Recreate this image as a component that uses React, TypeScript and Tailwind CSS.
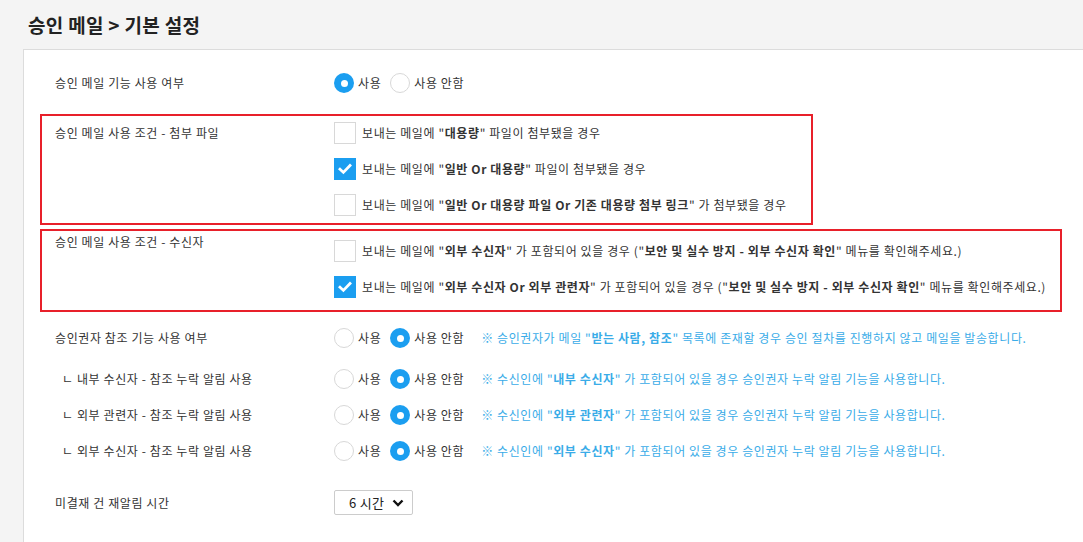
import React from "react";

const BLUE = "bg-[#1b9ef0]";

function Radio({ checked, label }: { checked?: boolean; label: string }) {
  return (
    <div className="flex items-center h-[20px]">
      {checked ? (
        <span className={`w-[20px] h-[20px] rounded-full ${BLUE} flex items-center justify-center`}>
          <span className="w-[7px] h-[7px] rounded-full bg-white" />
        </span>
      ) : (
        <span className="w-[20px] h-[20px] rounded-full border border-[#d8d8d8] bg-white" />
      )}
      <span className="ml-[4px] leading-[16px]">{label}</span>
    </div>
  );
}

function Check({ checked, children }: { checked?: boolean; children: React.ReactNode }) {
  return (
    <div className="flex items-center h-[22px]">
      {checked ? (
        <span className={`w-[22px] h-[22px] ${BLUE} flex items-center justify-center shrink-0`}>
          <svg width="14" height="12" viewBox="0 0 14 12">
            <path d="M2 6.2 L5.4 9.4 L12 2.6" stroke="white" strokeWidth="2.8" fill="none" strokeLinecap="square" />
          </svg>
        </span>
      ) : (
        <span className="w-[22px] h-[22px] border border-[#d8d8d8] bg-white shrink-0" />
      )}
      <span className="ml-[6px] leading-[16px] whitespace-nowrap">{children}</span>
    </div>
  );
}

function RadioPair({ first }: { first: boolean }) {
  return (
    <div className="flex items-center gap-[9px]">
      <Radio checked={first} label="사용" />
      <Radio checked={!first} label="사용 안함" />
    </div>
  );
}

function Hint({ children }: { children: React.ReactNode }) {
  return <span className="ml-[17px] text-[#3aace8] leading-[16px] whitespace-nowrap">{children}</span>;
}

function Row({
  label,
  indent,
  className,
  children,
}: {
  label: string;
  indent?: boolean;
  className?: string;
  children: React.ReactNode;
}) {
  return (
    <div className={`flex items-center ${className ?? ""}`}>
      <div className={`w-[294px] shrink-0 leading-[16px] ${indent ? "pl-[22px]" : "pl-[15px]"}`}>{label}</div>
      {children}
    </div>
  );
}

export default function App() {
  return (
    <div className="w-[1083px] h-[542px] overflow-hidden bg-[#f4f4f4] text-[12px] tracking-[0.6px] text-[#333] font-['Noto_Sans_CJK_KR','Noto_Sans',sans-serif]">
      <h1 className="h-[49px] pl-[28px] pt-[12px] text-[19px] tracking-[0.3px] font-bold leading-[26px] text-[#222]">
        승인 메일 &gt; 기본 설정
      </h1>
      <div className="ml-[23px] h-[493px] bg-white border-l border-t border-[#dcdcdc] pl-[16px] pt-[23px]">
        <Row label="승인 메일 기능 사용 여부">
          <RadioPair first={true} />
        </Row>

        <div className="mt-[21px] w-[773px] border-2 border-[#e8202a] flex pt-[6px] pb-[7px]">
          <div className="w-[292px] shrink-0 pl-[13px] h-[22px] flex items-center leading-[16px]">
            승인 메일 사용 조건 - 첨부 파일
          </div>
          <div className="flex flex-col gap-[14px]">
            <Check>
              보내는 메일에 "<b>대용량</b>" 파일이 첨부됐을 경우
            </Check>
            <Check checked>
              보내는 메일에 "<b>일반 Or 대용량</b>" 파일이 첨부됐을 경우
            </Check>
            <Check>
              보내는 메일에 "<b>일반 Or 대용량 파일 Or 기존 대용량 첨부 링크</b>" 가 첨부됐을 경우
            </Check>
          </div>
        </div>

        <div className="mt-[4px] w-[1022px] border-2 border-[#e8202a] flex pb-[12px]">
          <div className="w-[292px] shrink-0 pl-[13px] pt-[3px] leading-[16px]">승인 메일 사용 조건 - 수신자</div>
          <div className="flex flex-col gap-[14px] pt-[9px]">
            <Check>
              보내는 메일에 "<b>외부 수신자</b>" 가 포함되어 있을 경우 ("<b>보안 및 실수 방지 - 외부 수신자 확인</b>" 메뉴를 확인해주세요.)
            </Check>
            <Check checked>
              보내는 메일에 "<b>외부 수신자 Or 외부 관련자</b>" 가 포함되어 있을 경우 ("<b>보안 및 실수 방지 - 외부 수신자 확인</b>" 메뉴를 확인해주세요.)
            </Check>
          </div>
        </div>

        <Row label="승인권자 참조 기능 사용 여부" className="mt-[16px]">
          <RadioPair first={false} />
          <Hint>
            ※ 승인권자가 메일 "<b>받는 사람, 참조</b>" 목록에 존재할 경우 승인 절차를 진행하지 않고 메일을 발송합니다.
          </Hint>
        </Row>
        <Row label="ㄴ 내부 수신자 - 참조 누락 알림 사용" indent className="mt-[21px]">
          <RadioPair first={false} />
          <Hint>
            ※ 수신인에 "<b>내부 수신자</b>" 가 포함되어 있을 경우 승인권자 누락 알림 기능을 사용합니다.
          </Hint>
        </Row>
        <Row label="ㄴ 외부 관련자 - 참조 누락 알림 사용" indent className="mt-[16px]">
          <RadioPair first={false} />
          <Hint>
            ※ 수신인에 "<b>외부 관련자</b>" 가 포함되어 있을 경우 승인권자 누락 알림 기능을 사용합니다.
          </Hint>
        </Row>
        <Row label="ㄴ 외부 수신자 - 참조 누락 알림 사용" indent className="mt-[16px]">
          <RadioPair first={false} />
          <Hint>
            ※ 수신인에 "<b>외부 수신자</b>" 가 포함되어 있을 경우 승인권자 누락 알림 기능을 사용합니다.
          </Hint>
        </Row>

        <Row label="미결재 건 재알림 시간" className="mt-[29px]">
          <div className="w-[79px] h-[25px] border border-[#cccccc] rounded-[2px] flex items-center pl-[14px] gap-[8px]">
            <span className="leading-[16px] text-[13px] tracking-[0.3px] text-[#222]">6 시간</span>
            <svg width="12" height="8" viewBox="0 0 12 8">
              <path d="M1.5 1.5 L6 6 L10.5 1.5" stroke="#111" strokeWidth="2.4" fill="none" />
            </svg>
          </div>
        </Row>
      </div>
    </div>
  );
}
